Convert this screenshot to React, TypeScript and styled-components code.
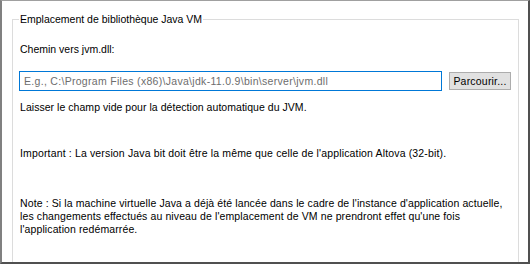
import styled, { createGlobalStyle } from "styled-components";

const GlobalStyle = createGlobalStyle`
  html, body {
    margin: 0;
    padding: 0;
    background: #ffffff;
  }
  body {
    font-family: "Liberation Sans", Arial, sans-serif;
    font-size: 10.5px;
    color: #000000;
  }
`;

const Window = styled.div`
  box-sizing: border-box;
  width: 530px;
  height: 264px;
  overflow: hidden;
  background: #ffffff;
  border-style: solid;
  border-width: 1px 2px 2px 2px;
  border-color: #a0a0a0 #505050 #505050 #808080;
  padding: 12px 9px 0 10px;
`;

const Group = styled.fieldset`
  box-sizing: border-box;
  margin: 0;
  min-height: 280px;
  border: 1px solid #dcdcdc;
  padding: 16px 7px 0 7px;
  display: flex;
  flex-direction: column;
  align-items: flex-start;
`;

const GroupTitle = styled.legend`
  padding: 0 1px;
  margin-left: -1px;
  line-height: 13px;
`;

const Label = styled.div`
  line-height: 13px;
  margin-top: 1px;
  white-space: nowrap;
`;

const PathRow = styled.div`
  display: flex;
  align-items: center;
  gap: 7px;
  margin: 15px 0 0 -1px;
`;

const PathInput = styled.input`
  box-sizing: border-box;
  width: 423px;
  height: 20px;
  margin: 0;
  padding: 0 4px;
  border: 1px solid #0078d7;
  outline: none;
  font-family: inherit;
  font-size: 10.5px;
  color: #000000;
  &::placeholder {
    color: #6d6d6d;
    letter-spacing: 0.3px;
  }
`;

const BrowseButton = styled.button`
  box-sizing: border-box;
  width: 62px;
  height: 18px;
  margin: 0;
  padding: 0;
  background: #e1e1e1;
  border: 1px solid #adadad;
  font-family: inherit;
  font-size: 10.5px;
  letter-spacing: 0.2px;
  color: #000000;
`;

const Paragraph = styled.p<{ $gap: number; $spacing: number }>`
  margin: ${({ $gap }) => $gap}px 0 0 0;
  line-height: 13px;
  letter-spacing: ${({ $spacing }) => $spacing}px;
  white-space: nowrap;
`;

export default function App() {
  return (
    <>
      <GlobalStyle />
      <Window>
        <Group>
          <GroupTitle>Emplacement de bibliothèque Java VM</GroupTitle>
          <Label>Chemin vers jvm.dll:</Label>
          <PathRow>
            <PathInput
              placeholder={"E.g., C:\\Program Files (x86)\\Java\\jdk-11.0.9\\bin\\server\\jvm.dll"}
            />
            <BrowseButton>Parcourir...</BrowseButton>
          </PathRow>
          <Paragraph $gap={10} $spacing={0.04}>
            Laisser le champ vide pour la détection automatique du JVM.
          </Paragraph>
          <Paragraph $gap={33} $spacing={0.15}>
            Important : La version Java bit doit être la même que celle de l'application Altova (32-bit).
          </Paragraph>
          <Paragraph $gap={37} $spacing={0.11}>
            Note : Si la machine virtuelle Java a déjà été lancée dans le cadre de l'instance d'application actuelle,
            <br />
            les changements effectués au niveau de l'emplacement de VM ne prendront effet qu'une fois
            <br />
            l'application redémarrée.
          </Paragraph>
        </Group>
      </Window>
    </>
  );
}
